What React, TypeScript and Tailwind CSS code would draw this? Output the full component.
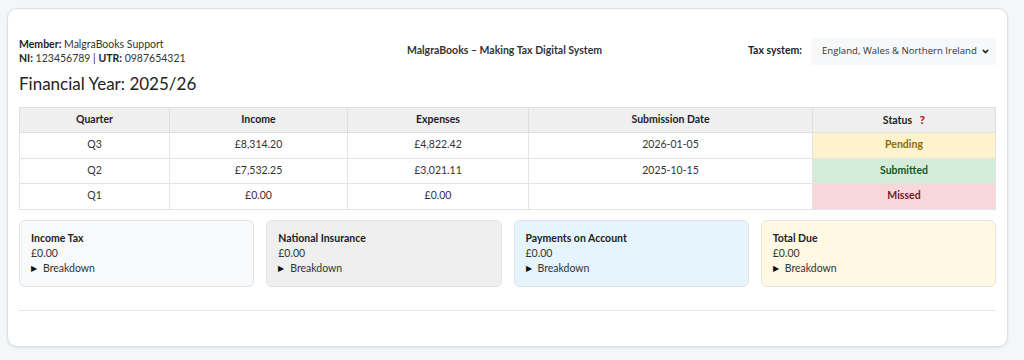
import { ChevronDown } from 'lucide-react';

const ROWS = [
  { q: "Q3", income: "£8,314.20", expenses: "£4,822.42", date: "2026-01-05", status: "Pending" },
  { q: "Q2", income: "£7,532.25", expenses: "£3,021.11", date: "2025-10-15", status: "Submitted" },
  { q: "Q1", income: "£0.00", expenses: "£0.00", date: "", status: "Missed" },
];

const STATUS_STYLES: Record<string, string> = {
  Pending: "bg-[#fff3cd] text-[#8a6d0b]",
  Submitted: "bg-[#d4edda] text-[#155724]",
  Missed: "bg-[#f8d7da] text-[#721c24]",
};

const CARDS = [
  { title: "Income Tax", bg: "bg-[#f8f9fa]" },
  { title: "National Insurance", bg: "bg-[#efefef]" },
  { title: "Payments on Account", bg: "bg-[#e6f4fd]" },
  { title: "Total Due", bg: "bg-[#fff8e3]" },
];

export default function App() {
  return (
    <div className="min-h-[360px] bg-[#f5f6f8] pl-[7px] pr-[16px] pt-[8px] pb-[14px] font-['Lato',sans-serif] text-[#212529]">
      <div className="rounded-[10px] border border-[#dcdfe3] bg-white px-[11px] pt-[28px] pb-[35px] shadow-[0_1px_3px_rgba(0,0,0,0.08)]">
        <div className="grid grid-cols-[1fr_auto_1fr] items-center">
          <div className="text-[10.5px] leading-[14px] text-[#333]">
            <div><span className="font-bold text-[#222]">Member:</span> MalgraBooks Support</div>
            <div><span className="font-bold text-[#222]">NI:</span> 123456789 | <span className="font-bold text-[#222]">UTR:</span> 0987654321</div>
          </div>
          <div className="pr-[6px] text-[10.5px] font-bold text-[#333]">MalgraBooks – Making Tax Digital System</div>
          <div className="flex items-center justify-end gap-[9px]">
            <span className="text-[10.5px] font-bold text-[#222]">Tax system:</span>
            <div className="flex h-[27px] w-[185px] items-center justify-between whitespace-nowrap bg-[#f7f8fa] pl-[11px] pr-[6px] font-['Open_Sans',sans-serif] text-[9.6px] text-[#333]">
              <span>England, Wales &amp; Northern Ireland</span>
              <ChevronDown className="h-[9px] w-[9px] text-[#222]" strokeWidth={4} />
            </div>
          </div>
        </div>

        <h2 className="mt-[7px] text-[17px] leading-[24px] text-[#222]">Financial Year: 2025/26</h2>

        <table className="mt-[11px] w-full border-collapse text-center text-[10.5px] text-[#333]">
          <thead>
            <tr className="h-[25px] bg-[#efefef] text-[#222]">
              <th className="w-[150px] border border-[#dedede] font-bold">Quarter</th>
              <th className="w-[178px] border border-[#dedede] font-bold">Income</th>
              <th className="w-[181px] border border-[#dedede] font-bold">Expenses</th>
              <th className="w-[284px] border border-[#dedede] font-bold">Submission Date</th>
              <th className="border border-[#dedede] font-bold">
                Status <span className="ml-[5px] text-[12px] font-black text-[#c0141c]">?</span>
              </th>
            </tr>
          </thead>
          <tbody>
            {ROWS.map((r) => (
              <tr key={r.q} className="h-[25.5px]">
                <td className="border border-[#e5e5e5]">{r.q}</td>
                <td className="border border-[#e5e5e5]">{r.income}</td>
                <td className="border border-[#e5e5e5]">{r.expenses}</td>
                <td className="border border-[#e5e5e5]">{r.date}</td>
                <td className={`border border-[#e5e5e5] font-bold ${STATUS_STYLES[r.status]}`}>{r.status}</td>
              </tr>
            ))}
          </tbody>
        </table>

        <div className="mt-[10px] grid grid-cols-4 gap-[12px]">
          {CARDS.map((c) => (
            <div key={c.title} className={`h-[67px] rounded-[6px] border border-[#e3e3e3] ${c.bg} px-[11px] pt-[10px] text-[10.5px] leading-[15px] text-[#333]`}>
              <div className="font-bold text-[#222]">{c.title}</div>
              <div>£0.00</div>
              <div className="flex items-center gap-[6px]">
                <span className="text-[8px] text-[#111]">▶</span>
                <span>Breakdown</span>
              </div>
            </div>
          ))}
        </div>

        <div className="mt-[23px] border-t border-[#e6e6e6]" />
      </div>
    </div>
  );
}
